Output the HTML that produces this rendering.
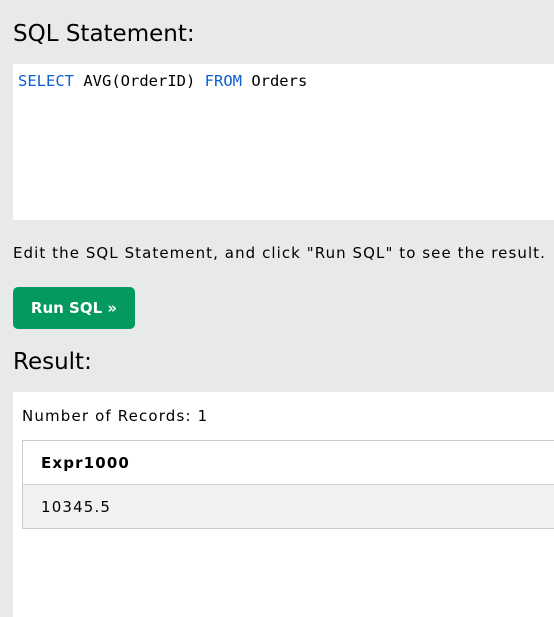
<!DOCTYPE html>
<html><head><style>
body{margin:0;width:554px;height:617px;background:#e7e9eb;overflow:hidden;font-family:"DejaVu Sans","Liberation Sans",sans-serif;position:relative}
.h{position:absolute;left:13px;font-size:23px;color:#000;font-family:"DejaVu Sans",sans-serif;font-weight:normal}
.code{position:absolute;left:13px;top:64px;width:541px;height:156px;background:#fff}
.code span.t{position:absolute;left:5px;top:8px;font-family:"DejaVu Sans Mono","Liberation Mono",monospace;font-size:15.5px;color:#000;white-space:pre}
.k{color:#0b5fd3}
.p{position:absolute;left:13px;top:244px;font-size:15px;color:#000;letter-spacing:1.07px;white-space:nowrap}
.btn{position:absolute;left:13px;top:287px;width:122px;height:42px;background:#04995f;border-radius:5px;color:#fff;font-weight:bold;font-size:15px;line-height:42px;text-align:center}
.res{position:absolute;left:13px;top:392px;width:541px;height:225px;background:#fff}
.n{position:absolute;left:9px;top:15px;font-size:15px;letter-spacing:1.15px}
table{position:absolute;left:9px;top:48px;width:534px;border-collapse:collapse;font-size:15px;letter-spacing:1.15px}
td{border:1px solid #ccc;border-right:none;padding:0 18px;height:43px}
th{border:1px solid #ccc;border-right:none;text-align:left;padding:0 18px;height:43px}
</style></head><body>
<div class="h" style="top:21px">SQL Statement:</div>
<div class="code"><span class="t"><span class="k">SELECT</span> AVG(OrderID) <span class="k">FROM</span> Orders</span></div>
<div class="p">Edit the SQL Statement, and click "Run SQL" to see the result.</div>
<div class="btn">Run SQL »</div>
<div class="h" style="top:349px">Result:</div>
<div class="res"><div class="n">Number of Records: 1</div>
<table><tr><th>Expr1000</th></tr><tr><td style="background:#f1f1f1">10345.5</td></tr></table></div>
</body></html>
